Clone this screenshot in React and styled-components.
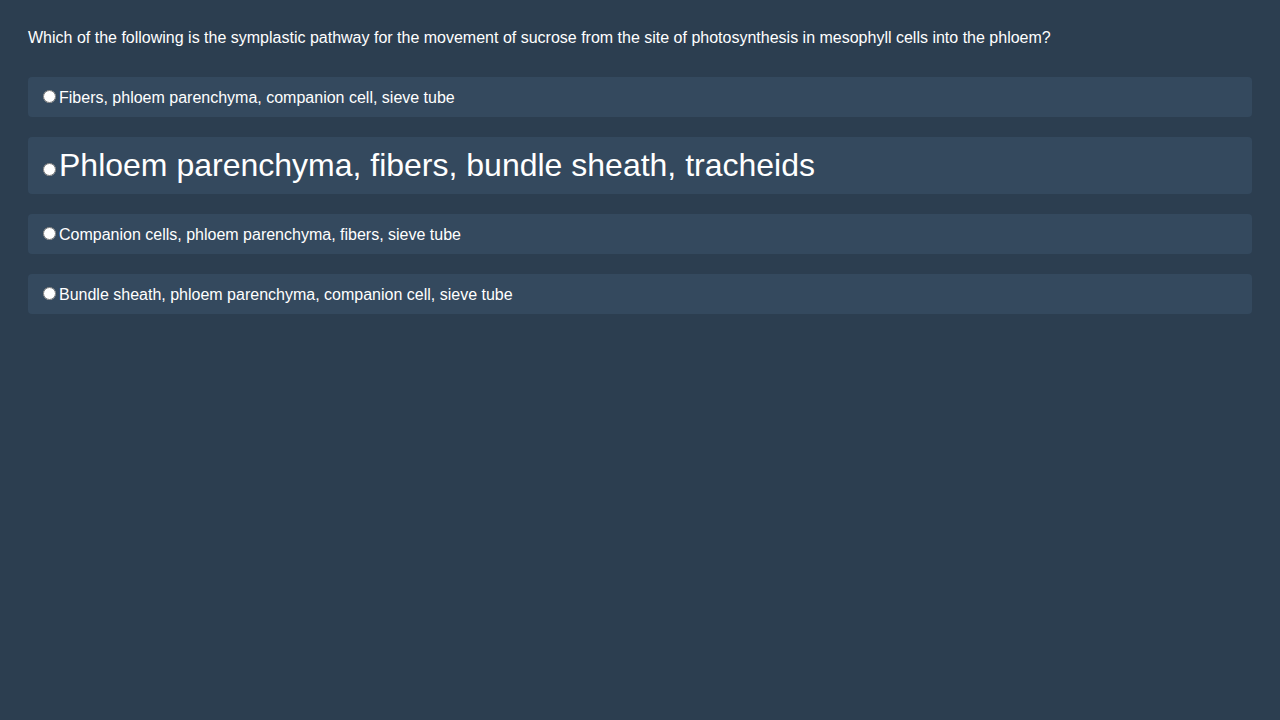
import React from "react";
import styled, { createGlobalStyle } from "styled-components";

const GlobalStyle = createGlobalStyle`
  html, body {
    margin: 0;
    background: #2c3e50;
  }
  body {
    font-family: "Liberation Sans", Arial, sans-serif;
    color: #ffffff;
  }
`;

const Page = styled.div`
  padding: 28px;
  min-height: 720px;
  box-sizing: border-box;
  background: #2c3e50;
`;

const Question = styled.p`
  margin: 0 0 30px;
  padding-top: 1px;
  font-size: 16px;
  line-height: 18px;
`;

const Options = styled.div`
  display: flex;
  flex-direction: column;
  gap: 20px;
`;

const Option = styled.label`
  display: block;
  padding: 10px;
  background: #34495e;
  border-radius: 4px;
  font-size: ${(p) => (p.$big ? "32px" : "16px")};
  cursor: pointer;
`;

const options = [
  "Fibers, phloem parenchyma, companion cell, sieve tube",
  "Phloem parenchyma, fibers, bundle sheath, tracheids",
  "Companion cells, phloem parenchyma, fibers, sieve tube",
  "Bundle sheath, phloem parenchyma, companion cell, sieve tube",
];

export default function App() {
  return (
    <Page>
      <GlobalStyle />
      <Question>
        Which of the following is the symplastic pathway for the movement of sucrose from the site of photosynthesis in mesophyll cells into the phloem?
      </Question>
      <Options>
        {options.map((text, i) => (
          <Option key={i} $big={i === 1}>
            <input type="radio" name="answer" />
            {text}
          </Option>
        ))}
      </Options>
    </Page>
  );
}
